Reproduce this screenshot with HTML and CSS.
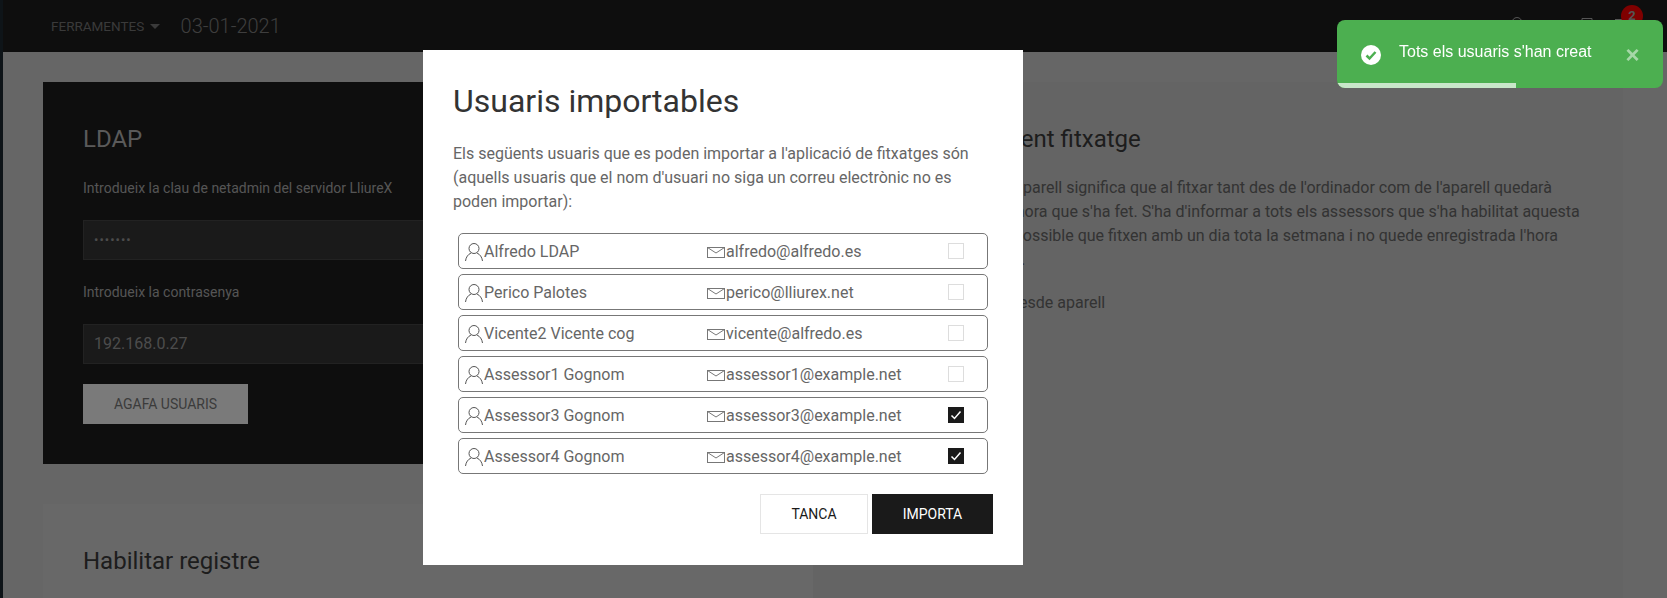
FILE: index.html
```html
<!DOCTYPE html>
<html lang="ca">
  <head>
    <meta charset="UTF-8" />
    <meta name="viewport" content="width=device-width, initial-scale=1.0" />
    <title>Usuaris importables</title>
    <link rel="stylesheet" href="styles.css">
  </head>
  <body>
    <aside class="sidebar"></aside>

    <div class="page">
      <header class="topbar">
        <a class="tools">Ferramentes <span class="caret"></span></a>
        <span class="date">03-01-2021</span>
        <div class="topbar-icons">
          <svg class="top-icon icon-bell" width="20" height="18" viewBox="0 0 20 18"><path d="M10 0.500c-3 0-5 2.500-5 5.500v5l-2 3h14l-2-3V6c0-3-2-5.500-5-5.500z" /></svg>
          <svg class="top-icon" width="20" height="18" viewBox="0 0 20 18"><path d="M5 1.500h10v14H5z" /></svg>
          <div class="bar-icon">
            <svg class="top-icon" width="20" height="18" viewBox="0 0 20 18"><path d="M0 2.500h20v13H0z" /></svg>
            <span class="badge">2</span>
          </div>
        </div>
      </header>

      <main class="content">
        <section class="card card-dark">
          <h2>LDAP</h2>
          <label class="field-label">Introdueix la clau de netadmin del servidor LliureX</label>
          <div class="field field-pass">•••••••</div>
          <label class="field-label">Introdueix la contrasenya</label>
          <div class="field">192.168.0.27</div>
          <button class="btn-light">Agafa usuaris</button>
        </section>

        <section class="card card-wide">
          <h2>Habilitar segment fitxatge</h2>
          <p class="info">Habilitar el fitxatge d'aparell significa que al fitxar tant des de l'ordinador com de l'aparell quedarà<br>registrada la data, o l'hora que s'ha fet. S'ha d'informar a tots els assessors que s'ha habilitat aquesta<br>opció, ja que ni és impossible que fitxen amb un dia tota la setmana i no quede enregistrada l'hora<br>real del fitxatge de hui.</p>
          <p class="info info-last">Habilitar registre fet desde aparell</p>
        </section>

        <section class="card card-low">
          <h2>Habilitar registre</h2>
        </section>
      </main>
    </div>

    <div class="overlay"></div>

    <div class="modal">
      <h1>Usuaris importables</h1>
      <p class="modal-text">Els següents usuaris que es poden importar a l'aplicació de fitxatges són (aquells usuaris que el nom d'usuari no siga un correu electrònic no es poden importar):</p>

      <ul class="user-list">
        <li class="user-row">
          <span class="user-name"><svg class="ico-user" width="18" height="18" viewBox="0 0 18 18"><circle cx="9" cy="5.500" r="5" /><path d="M0.500 18C1 14 3 11.500 6 10M17.500 18C17 14 15 11.500 12 10" /></svg>Alfredo LDAP</span>
          <span class="user-mail"><svg class="ico-mail" width="18" height="11" viewBox="0 0 18 11"><rect x="0.500" y="0.500" width="17" height="10" /><path d="M0.500 0.500L9 6l8.500-5.500" /></svg>alfredo@alfredo.es</span>
          <span class="check"></span>
        </li>
        <li class="user-row">
          <span class="user-name"><svg class="ico-user" width="18" height="18" viewBox="0 0 18 18"><circle cx="9" cy="5.500" r="5" /><path d="M0.500 18C1 14 3 11.500 6 10M17.500 18C17 14 15 11.500 12 10" /></svg>Perico Palotes</span>
          <span class="user-mail"><svg class="ico-mail" width="18" height="11" viewBox="0 0 18 11"><rect x="0.500" y="0.500" width="17" height="10" /><path d="M0.500 0.500L9 6l8.500-5.500" /></svg>perico@lliurex.net</span>
          <span class="check"></span>
        </li>
        <li class="user-row">
          <span class="user-name"><svg class="ico-user" width="18" height="18" viewBox="0 0 18 18"><circle cx="9" cy="5.500" r="5" /><path d="M0.500 18C1 14 3 11.500 6 10M17.500 18C17 14 15 11.500 12 10" /></svg>Vicente2 Vicente cog</span>
          <span class="user-mail"><svg class="ico-mail" width="18" height="11" viewBox="0 0 18 11"><rect x="0.500" y="0.500" width="17" height="10" /><path d="M0.500 0.500L9 6l8.500-5.500" /></svg>vicente@alfredo.es</span>
          <span class="check"></span>
        </li>
        <li class="user-row">
          <span class="user-name"><svg class="ico-user" width="18" height="18" viewBox="0 0 18 18"><circle cx="9" cy="5.500" r="5" /><path d="M0.500 18C1 14 3 11.500 6 10M17.500 18C17 14 15 11.500 12 10" /></svg>Assessor1 Gognom</span>
          <span class="user-mail"><svg class="ico-mail" width="18" height="11" viewBox="0 0 18 11"><rect x="0.500" y="0.500" width="17" height="10" /><path d="M0.500 0.500L9 6l8.500-5.500" /></svg>assessor1@example.net</span>
          <span class="check"></span>
        </li>
        <li class="user-row">
          <span class="user-name"><svg class="ico-user" width="18" height="18" viewBox="0 0 18 18"><circle cx="9" cy="5.500" r="5" /><path d="M0.500 18C1 14 3 11.500 6 10M17.500 18C17 14 15 11.500 12 10" /></svg>Assessor3 Gognom</span>
          <span class="user-mail"><svg class="ico-mail" width="18" height="11" viewBox="0 0 18 11"><rect x="0.500" y="0.500" width="17" height="10" /><path d="M0.500 0.500L9 6l8.500-5.500" /></svg>assessor3@example.net</span>
          <span class="check checked"><svg width="16" height="16" viewBox="0 0 16 16"><path d="M3.500 8.500l3 3 6-7" /></svg></span>
        </li>
        <li class="user-row">
          <span class="user-name"><svg class="ico-user" width="18" height="18" viewBox="0 0 18 18"><circle cx="9" cy="5.500" r="5" /><path d="M0.500 18C1 14 3 11.500 6 10M17.500 18C17 14 15 11.500 12 10" /></svg>Assessor4 Gognom</span>
          <span class="user-mail"><svg class="ico-mail" width="18" height="11" viewBox="0 0 18 11"><rect x="0.500" y="0.500" width="17" height="10" /><path d="M0.500 0.500L9 6l8.500-5.500" /></svg>assessor4@example.net</span>
          <span class="check checked"><svg width="16" height="16" viewBox="0 0 16 16"><path d="M3.500 8.500l3 3 6-7" /></svg></span>
        </li>
      </ul>

      <div class="modal-actions">
        <button class="btn-close">Tanca</button>
        <button class="btn-import">Importa</button>
      </div>
    </div>

    <div class="toast">
      <svg class="toast-icon" width="20" height="20" viewBox="0 0 20 20"><circle cx="10" cy="10" r="10" /><path d="M5.500 10.500l3 3 6-6.500" /></svg>
      <span class="toast-text">Tots els usuaris s'han creat</span>
      <span class="toast-close">×</span>
      <div class="toast-progress"></div>
    </div>
  </body>
</html>
```

FILE: styles.css
```css
/* Base */
* {
  box-sizing: border-box;
  margin: 0;
  padding: 0;
}

html {
  overflow: hidden;
}

body {
  font-family: Roboto, sans-serif;
  background-color: #cccccc;
  color: #666;
  display: flex;
  height: 598px;
  overflow: hidden;
}

.sidebar {
  width: 3px;
  flex-shrink: 0;
  background-color: #1c2830;
}

.page {
  flex: 1;
  min-width: 0;
  height: 598px;
  overflow: hidden;
}

/* Top bar */
.topbar {
  height: 52px;
  background-color: #1c1c1c;
  display: flex;
  align-items: center;
  padding-left: 48px;
}

.tools {
  font-size: 13.500px;
  text-transform: uppercase;
  color: #747474;
}

.caret {
  display: inline-block;
  border-top: 5px solid #747474;
  border-left: 5px solid transparent;
  border-right: 5px solid transparent;
  vertical-align: 2px;
  margin-left: 2px;
}

.date {
  font-size: 20px;
  font-weight: 300;
  color: #7c7c7c;
  margin-left: 21px;
}

.topbar-icons {
  margin-left: auto;
  margin-right: 32px;
  display: flex;
  gap: 18px;
  align-items: center;
}

.icon-bell {
  margin-right: 32px;
}

.top-icon {
  display: block;
  fill: none;
  stroke: #aaa;
}

.bar-icon {
  position: relative;
}

.badge {
  position: absolute;
  top: -12px;
  left: 6px;
  width: 22px;
  height: 22px;
  border-radius: 50%;
  background-color: #f00;
  color: #aaa;
  font-size: 13px;
  font-weight: 700;
  text-align: center;
  line-height: 22px;
}

/* Cards */
.content {
  display: grid;
  grid-template-columns: 770px 810px;
  row-gap: 40px;
  padding: 30px 40px 0;
}

.card {
  background-color: #d0d0d0;
  padding: 40px;
}

.card h2 {
  font-size: 24px;
  font-weight: 400;
  color: #3a3a3a;
  margin-bottom: 20px;
  line-height: 34px;
}

.card-dark {
  background-color: #1c1c1c;
  height: 382px;
}

.card-dark h2 {
  color: #b4b4b4;
}

.card-wide {
  grid-column: 2;
  grid-row: 1 / span 2;
  background-color: #c8c8c8;
  padding-left: 52px;
}

.card-low {
  height: 300px;
}

.field-label {
  display: block;
  font-size: 14px;
  line-height: 24px;
  color: #aaa;
}

.field {
  height: 40px;
  margin: 20px 0;
  background-color: #343434;
  border: 1px solid #444;
  font-size: 16px;
  line-height: 38px;
  padding-left: 10px;
  color: #999;
}

.field-pass {
  font-size: 13px;
  letter-spacing: 1px;
}

.btn-light {
  font-family: Roboto, sans-serif;
  width: 165px;
  height: 40px;
  background-color: #f5f5f5;
  border: none;
  font-size: 14px;
  text-transform: uppercase;
  color: #777;
}

.info {
  font-size: 16px;
  line-height: 24px;
  color: #666;
  white-space: nowrap;
}

.info-last {
  margin-top: 19px;
}

/* Overlay */
.overlay {
  position: fixed;
  top: 0;
  left: 0;
  right: 0;
  bottom: 0;
  background-color: rgba(0, 0, 0, 0.5);
}

/* Modal */
.modal {
  position: fixed;
  top: 50px;
  left: 423px;
  width: 600px;
  height: 515px;
  background-color: #fff;
  padding: 30px;
}

.modal h1 {
  font-size: 32px;
  font-weight: 400;
  line-height: 42px;
  color: #333;
  margin-bottom: 20px;
}

.modal-text {
  font-size: 16px;
  line-height: 24px;
  color: #666;
  margin-bottom: 19px;
}

.user-list {
  list-style: none;
  display: flex;
  flex-direction: column;
  gap: 5px;
  margin: 0 5px;
}

.user-row {
  height: 36px;
  border: 1px solid #777;
  border-radius: 5px;
  display: flex;
  align-items: center;
  padding-left: 6px;
  font-size: 16px;
  color: #666;
}

.user-name {
  width: 242px;
  display: flex;
  align-items: center;
}

.user-mail {
  width: 241px;
  display: flex;
  align-items: center;
}

.ico-user {
  fill: none;
  stroke: #555;
  margin: 2px 1px 0 0;
}

.ico-mail {
  fill: none;
  stroke: #777;
  margin: 3px 1px 0 0;
}

.check {
  width: 16px;
  height: 16px;
  border: 1px solid #ddd;
}

.checked {
  background-color: #1a1a1a;
  border: none;
}

.checked svg {
  display: block;
  fill: none;
  stroke: #fff;
  stroke-width: 1.500;
}

.modal-actions {
  display: flex;
  justify-content: flex-end;
  gap: 4px;
  margin-top: 20px;
}

.modal-actions button {
  font-family: Roboto, sans-serif;
  height: 40px;
  font-size: 14px;
  text-transform: uppercase;
}

.btn-close {
  width: 108px;
  background-color: #fff;
  border: 1px solid #e5e5e5;
  color: #1a1a1a;
}

.btn-import {
  width: 121px;
  background-color: #1a1a1a;
  border: none;
  color: #fff;
}

/* Toast */
.toast {
  position: fixed;
  top: 20px;
  left: 1337px;
  width: 326px;
  height: 68px;
  background-color: #4caf50;
  border-radius: 8px;
  overflow: hidden;
  display: flex;
  align-items: center;
  font-family: "Liberation Sans", Arial, sans-serif;
  color: #fff;
  padding-left: 24px;
}

.toast-icon {
  flex-shrink: 0;
  margin-top: 1px;
}

.toast-icon circle {
  fill: #fff;
}

.toast-icon path {
  fill: none;
  stroke: #4caf50;
  stroke-width: 2.500;
}

.toast-text {
  font-size: 16px;
  margin-left: 18px;
  margin-top: -4px;
}

.toast-close {
  font-size: 24px;
  font-weight: 700;
  opacity: 0.5;
  margin-left: 34px;
  margin-top: 1px;
}

.toast-progress {
  position: absolute;
  left: 0;
  bottom: 0;
  width: 179px;
  height: 5px;
  background-color: #c9e7ca;
}
```
